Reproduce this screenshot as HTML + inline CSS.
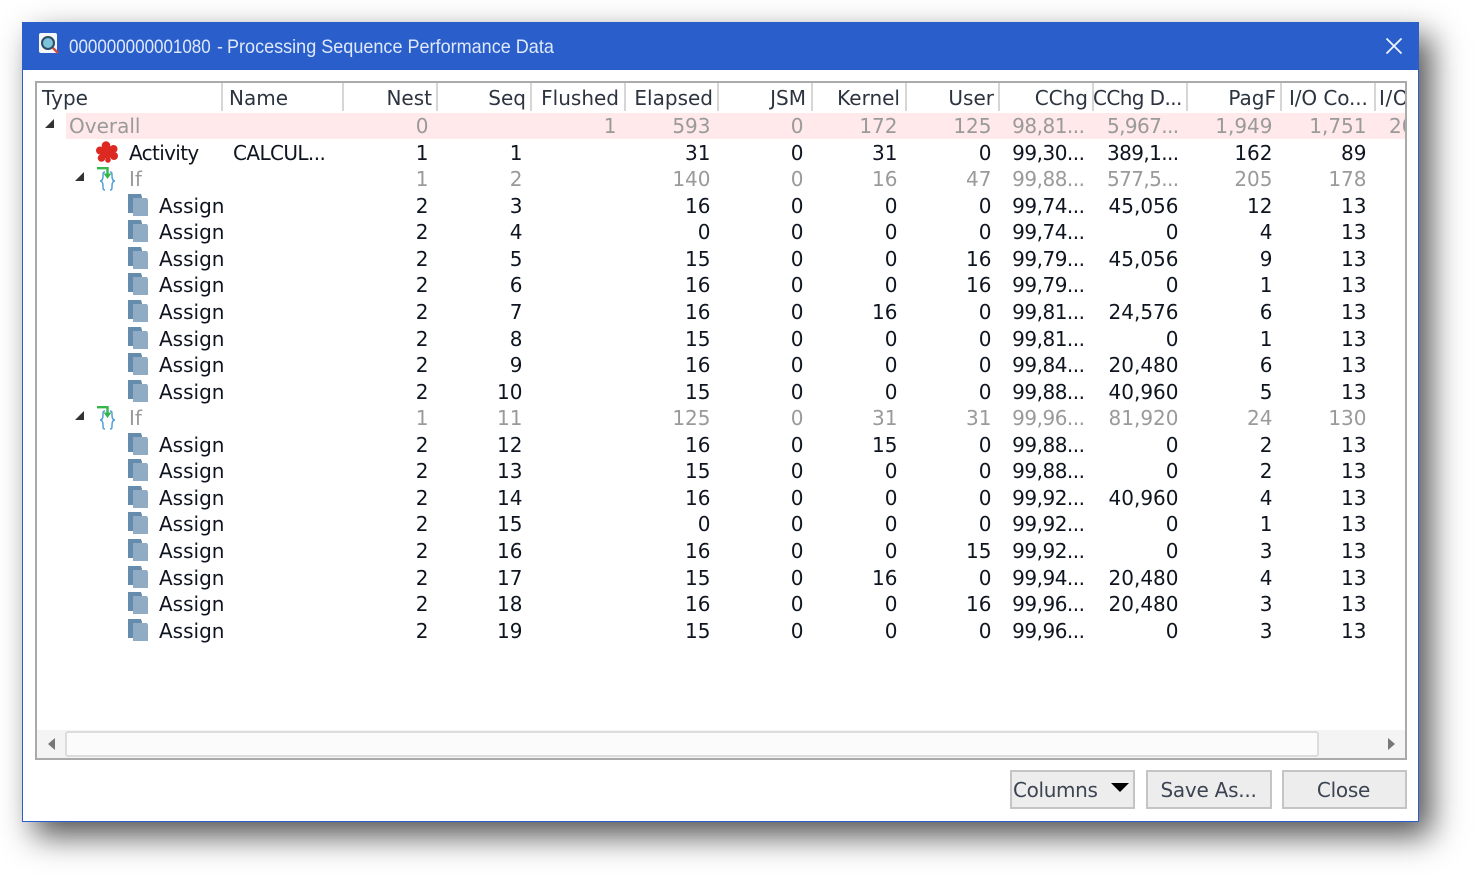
<!DOCTYPE html>
<html><head><meta charset="utf-8"><style>
html,body{margin:0;padding:0;width:1474px;height:877px;overflow:hidden;background:#fff}
body{position:relative;font-family:"DejaVu Sans","Liberation Sans",sans-serif;font-size:20px;color:#0f1520}
#win{position:absolute;left:22px;top:22px;width:1395px;height:798px;background:#fff;border:1px solid #2a5fcb;box-shadow:12px 14px 30px 0 rgba(0,0,0,.68)}
#bar{position:absolute;left:22px;top:22px;width:1397px;height:48px;background:#2a5fcb}
.tt{position:absolute;top:36px;font:19.5px/22px "Liberation Sans",sans-serif;color:#dfe9fb;white-space:nowrap;transform-origin:0 0}
#panel{position:absolute;left:35px;top:81px;width:1368px;height:675px;border:2px solid #aaa;overflow:hidden;background:#fff}
.h{position:absolute;top:2px;height:28px;line-height:26px;white-space:nowrap;color:#2c3440}
.s{position:absolute;top:0;width:2px;height:28px;background:#d6d6d6}
.r{position:absolute;left:0;width:1368px;height:26px;line-height:26px;white-space:nowrap}
.g{color:#9a9a9a}
.r span{position:absolute;top:0}
.a{text-align:right;width:100.5px}
.o{background:#ffe9ea;left:29px!important;width:1339px}
.c1{left:291px}.c2{left:385px}.c3{left:479px}.c4{left:573px}.c5{left:666px}.c6{left:760px}.c7{left:854px}.c8{left:947px;letter-spacing:-.5px}.c9{left:1041px}.c10{left:1135px}.c11{left:1229px}
.e{letter-spacing:-.6px}
.t{left:122px}.t2{left:92px}
.ic{position:absolute;left:91px;top:0}
.tri{position:absolute;width:0;height:0;border-style:solid;border-width:0 0 9px 9px;border-color:transparent transparent #333 transparent}
.b{position:absolute;top:770px;height:35px;width:121px;background:#ededed;border:2px solid #c4c4c4;text-align:center;line-height:37px;color:#3c4452;letter-spacing:-.25px}
svg{display:block}
</style></head><body>
<div id="win"></div>
<div id="bar"></div>
<svg style="position:absolute;left:38px;top:32px" width="24" height="24" viewBox="0 0 24 24"><rect x="1" y="1" width="18" height="20" rx="2" fill="#f4f7fb"/><circle cx="10" cy="11" r="6" fill="#7cc2d8" stroke="#2d4a66" stroke-width="2"/><path d="M15 16l5 5" stroke="#d8493a" stroke-width="2.4"/></svg>
<div class="tt" style="left:69px;transform:scaleX(.871)">000000000001080</div>
<div class="tt" style="left:217px;transform:scaleX(.9)">-</div>
<div class="tt" style="left:227px;transform:scaleX(.925)">Processing Sequence Performance Data</div>
<svg style="position:absolute;left:1385px;top:37px" width="18" height="18" viewBox="0 0 18 18"><path d="M1.500 1.500L16.500 16.500M16.500 1.500L1.500 16.500" stroke="#f0f4fc" stroke-width="1.800"/></svg>

<div id="panel">
<div class="h" style="left:5px">Type</div><div class="s" style="left:184px"></div>
<div class="h" style="left:192px">Name</div><div class="s" style="left:305px"></div>
<div class="h" style="right:973px">Nest</div><div class="s" style="left:399px"></div>
<div class="h" style="right:879px">Seq</div><div class="s" style="left:493px"></div>
<div class="h" style="right:786px">Flushed</div><div class="s" style="left:587px"></div>
<div class="h" style="right:692px">Elapsed</div><div class="s" style="left:680px"></div>
<div class="h" style="right:599px">JSM</div><div class="s" style="left:774px"></div>
<div class="h" style="right:505px">Kernel</div><div class="s" style="left:868px"></div>
<div class="h" style="right:411px">User</div><div class="s" style="left:961px"></div>
<div class="h" style="right:317px">CChg</div><div class="s" style="left:1055px"></div>
<div class="h" style="left:1056px;letter-spacing:-.6px">CChg D...</div><div class="s" style="left:1149px"></div>
<div class="h" style="right:129px">PagF</div><div class="s" style="left:1243px"></div>
<div class="h" style="left:1252px;letter-spacing:-.1px">I/O Co...</div><div class="s" style="left:1337px"></div>
<div class="h" style="left:1342px;letter-spacing:.6px">I/O</div>

<div class="r g" style="top:30px"><span class="o" style="height:26px"></span><span style="left:32px">Overall</span><span class="a c1">0</span><span class="a c3">1</span><span class="a c4">593</span><span class="a c5">0</span><span class="a c6">172</span><span class="a c7">125</span><span class="a c8">98,81...</span><span class="a c9 e">5,967...</span><span class="a c10">1,949</span><span class="a c11">1,751</span><span style="left:1352px">20</span></div>
<div class="tri" style="left:8px;top:36px"></div>

<div class="r" style="top:57px"><svg class="ic" style="left:59px;top:1px" width="23" height="24" viewBox="0 0 23 24"><g fill="#dc2a22"><circle cx="10" cy="4.500" r="4.300"/><circle cx="17.500" cy="8" r="4"/><circle cx="18" cy="15" r="4"/><circle cx="5.500" cy="17" r="3.800"/><circle cx="4" cy="9.500" r="4"/><circle cx="11" cy="11" r="6.500"/><circle cx="12" cy="19" r="2.800"/></g></svg><span style="left:92px;letter-spacing:-.65px">Activity</span><span style="left:196px;letter-spacing:-.6px">CALCUL...</span><span class="a c1">1</span><span class="a c2">1</span><span class="a c4">31</span><span class="a c5">0</span><span class="a c6">31</span><span class="a c7">0</span><span class="a c8">99,30...</span><span class="a c9 e">389,1...</span><span class="a c10">162</span><span class="a c11">89</span></div>

<div class="r g" style="top:83px"><svg class="ic" style="left:60px;top:1px" width="22" height="24" viewBox="0 0 22 24"><path d="M0 1.200h10.500v6" fill="none" stroke="#35b54a" stroke-width="2.400"/><path d="M6.500 6.500h8l-4 5.500z" fill="#35b54a"/><path d="M8 5c-2 0-2 1-2 4s-1 5-3 5c2 0 3 2 3 5s0 4 2 4M13 5c2 0 2 1 2 4s1 5 3 5c-2 0-3 2-3 5s0 4-2 4" fill="none" stroke="#4f9fd8" stroke-width="1.500"/></svg><span class="t2">If</span><span class="a c1">1</span><span class="a c2">2</span><span class="a c4">140</span><span class="a c5">0</span><span class="a c6">16</span><span class="a c7">47</span><span class="a c8">99,88...</span><span class="a c9 e">577,5...</span><span class="a c10">205</span><span class="a c11">178</span></div>
<div class="tri" style="left:38px;top:89px"></div>

<div class="r" style="top:110px"><svg class="ic" width="22" height="24" viewBox="0 0 22 24"><path d="M0 1h13l1 3v16H0z" fill="#668cad"/><path d="M5 5h14l1 2v16H5z" fill="#8facc4"/></svg><span class="t">Assign</span><span class="a c1">2</span><span class="a c2">3</span><span class="a c4">16</span><span class="a c5">0</span><span class="a c6">0</span><span class="a c7">0</span><span class="a c8">99,74...</span><span class="a c9">45,056</span><span class="a c10">12</span><span class="a c11">13</span></div>
<div class="r" style="top:136px"><svg class="ic" width="22" height="24" viewBox="0 0 22 24"><path d="M0 1h13l1 3v16H0z" fill="#668cad"/><path d="M5 5h14l1 2v16H5z" fill="#8facc4"/></svg><span class="t">Assign</span><span class="a c1">2</span><span class="a c2">4</span><span class="a c4">0</span><span class="a c5">0</span><span class="a c6">0</span><span class="a c7">0</span><span class="a c8">99,74...</span><span class="a c9">0</span><span class="a c10">4</span><span class="a c11">13</span></div>
<div class="r" style="top:163px"><svg class="ic" width="22" height="24" viewBox="0 0 22 24"><path d="M0 1h13l1 3v16H0z" fill="#668cad"/><path d="M5 5h14l1 2v16H5z" fill="#8facc4"/></svg><span class="t">Assign</span><span class="a c1">2</span><span class="a c2">5</span><span class="a c4">15</span><span class="a c5">0</span><span class="a c6">0</span><span class="a c7">16</span><span class="a c8">99,79...</span><span class="a c9">45,056</span><span class="a c10">9</span><span class="a c11">13</span></div>
<div class="r" style="top:189px"><svg class="ic" width="22" height="24" viewBox="0 0 22 24"><path d="M0 1h13l1 3v16H0z" fill="#668cad"/><path d="M5 5h14l1 2v16H5z" fill="#8facc4"/></svg><span class="t">Assign</span><span class="a c1">2</span><span class="a c2">6</span><span class="a c4">16</span><span class="a c5">0</span><span class="a c6">0</span><span class="a c7">16</span><span class="a c8">99,79...</span><span class="a c9">0</span><span class="a c10">1</span><span class="a c11">13</span></div>
<div class="r" style="top:216px"><svg class="ic" width="22" height="24" viewBox="0 0 22 24"><path d="M0 1h13l1 3v16H0z" fill="#668cad"/><path d="M5 5h14l1 2v16H5z" fill="#8facc4"/></svg><span class="t">Assign</span><span class="a c1">2</span><span class="a c2">7</span><span class="a c4">16</span><span class="a c5">0</span><span class="a c6">16</span><span class="a c7">0</span><span class="a c8">99,81...</span><span class="a c9">24,576</span><span class="a c10">6</span><span class="a c11">13</span></div>
<div class="r" style="top:243px"><svg class="ic" width="22" height="24" viewBox="0 0 22 24"><path d="M0 1h13l1 3v16H0z" fill="#668cad"/><path d="M5 5h14l1 2v16H5z" fill="#8facc4"/></svg><span class="t">Assign</span><span class="a c1">2</span><span class="a c2">8</span><span class="a c4">15</span><span class="a c5">0</span><span class="a c6">0</span><span class="a c7">0</span><span class="a c8">99,81...</span><span class="a c9">0</span><span class="a c10">1</span><span class="a c11">13</span></div>
<div class="r" style="top:269px"><svg class="ic" width="22" height="24" viewBox="0 0 22 24"><path d="M0 1h13l1 3v16H0z" fill="#668cad"/><path d="M5 5h14l1 2v16H5z" fill="#8facc4"/></svg><span class="t">Assign</span><span class="a c1">2</span><span class="a c2">9</span><span class="a c4">16</span><span class="a c5">0</span><span class="a c6">0</span><span class="a c7">0</span><span class="a c8">99,84...</span><span class="a c9">20,480</span><span class="a c10">6</span><span class="a c11">13</span></div>
<div class="r" style="top:296px"><svg class="ic" width="22" height="24" viewBox="0 0 22 24"><path d="M0 1h13l1 3v16H0z" fill="#668cad"/><path d="M5 5h14l1 2v16H5z" fill="#8facc4"/></svg><span class="t">Assign</span><span class="a c1">2</span><span class="a c2">10</span><span class="a c4">15</span><span class="a c5">0</span><span class="a c6">0</span><span class="a c7">0</span><span class="a c8">99,88...</span><span class="a c9">40,960</span><span class="a c10">5</span><span class="a c11">13</span></div>

<div class="r g" style="top:322px"><svg class="ic" style="left:60px;top:1px" width="22" height="24" viewBox="0 0 22 24"><path d="M0 1.200h10.500v6" fill="none" stroke="#35b54a" stroke-width="2.400"/><path d="M6.500 6.500h8l-4 5.500z" fill="#35b54a"/><path d="M8 5c-2 0-2 1-2 4s-1 5-3 5c2 0 3 2 3 5s0 4 2 4M13 5c2 0 2 1 2 4s1 5 3 5c-2 0-3 2-3 5s0 4-2 4" fill="none" stroke="#4f9fd8" stroke-width="1.500"/></svg><span class="t2">If</span><span class="a c1">1</span><span class="a c2">11</span><span class="a c4">125</span><span class="a c5">0</span><span class="a c6">31</span><span class="a c7">31</span><span class="a c8">99,96...</span><span class="a c9">81,920</span><span class="a c10">24</span><span class="a c11">130</span></div>
<div class="tri" style="left:38px;top:328px"></div>

<div class="r" style="top:349px"><svg class="ic" width="22" height="24" viewBox="0 0 22 24"><path d="M0 1h13l1 3v16H0z" fill="#668cad"/><path d="M5 5h14l1 2v16H5z" fill="#8facc4"/></svg><span class="t">Assign</span><span class="a c1">2</span><span class="a c2">12</span><span class="a c4">16</span><span class="a c5">0</span><span class="a c6">15</span><span class="a c7">0</span><span class="a c8">99,88...</span><span class="a c9">0</span><span class="a c10">2</span><span class="a c11">13</span></div>
<div class="r" style="top:375px"><svg class="ic" width="22" height="24" viewBox="0 0 22 24"><path d="M0 1h13l1 3v16H0z" fill="#668cad"/><path d="M5 5h14l1 2v16H5z" fill="#8facc4"/></svg><span class="t">Assign</span><span class="a c1">2</span><span class="a c2">13</span><span class="a c4">15</span><span class="a c5">0</span><span class="a c6">0</span><span class="a c7">0</span><span class="a c8">99,88...</span><span class="a c9">0</span><span class="a c10">2</span><span class="a c11">13</span></div>
<div class="r" style="top:402px"><svg class="ic" width="22" height="24" viewBox="0 0 22 24"><path d="M0 1h13l1 3v16H0z" fill="#668cad"/><path d="M5 5h14l1 2v16H5z" fill="#8facc4"/></svg><span class="t">Assign</span><span class="a c1">2</span><span class="a c2">14</span><span class="a c4">16</span><span class="a c5">0</span><span class="a c6">0</span><span class="a c7">0</span><span class="a c8">99,92...</span><span class="a c9">40,960</span><span class="a c10">4</span><span class="a c11">13</span></div>
<div class="r" style="top:428px"><svg class="ic" width="22" height="24" viewBox="0 0 22 24"><path d="M0 1h13l1 3v16H0z" fill="#668cad"/><path d="M5 5h14l1 2v16H5z" fill="#8facc4"/></svg><span class="t">Assign</span><span class="a c1">2</span><span class="a c2">15</span><span class="a c4">0</span><span class="a c5">0</span><span class="a c6">0</span><span class="a c7">0</span><span class="a c8">99,92...</span><span class="a c9">0</span><span class="a c10">1</span><span class="a c11">13</span></div>
<div class="r" style="top:455px"><svg class="ic" width="22" height="24" viewBox="0 0 22 24"><path d="M0 1h13l1 3v16H0z" fill="#668cad"/><path d="M5 5h14l1 2v16H5z" fill="#8facc4"/></svg><span class="t">Assign</span><span class="a c1">2</span><span class="a c2">16</span><span class="a c4">16</span><span class="a c5">0</span><span class="a c6">0</span><span class="a c7">15</span><span class="a c8">99,92...</span><span class="a c9">0</span><span class="a c10">3</span><span class="a c11">13</span></div>
<div class="r" style="top:482px"><svg class="ic" width="22" height="24" viewBox="0 0 22 24"><path d="M0 1h13l1 3v16H0z" fill="#668cad"/><path d="M5 5h14l1 2v16H5z" fill="#8facc4"/></svg><span class="t">Assign</span><span class="a c1">2</span><span class="a c2">17</span><span class="a c4">15</span><span class="a c5">0</span><span class="a c6">16</span><span class="a c7">0</span><span class="a c8">99,94...</span><span class="a c9">20,480</span><span class="a c10">4</span><span class="a c11">13</span></div>
<div class="r" style="top:508px"><svg class="ic" width="22" height="24" viewBox="0 0 22 24"><path d="M0 1h13l1 3v16H0z" fill="#668cad"/><path d="M5 5h14l1 2v16H5z" fill="#8facc4"/></svg><span class="t">Assign</span><span class="a c1">2</span><span class="a c2">18</span><span class="a c4">16</span><span class="a c5">0</span><span class="a c6">0</span><span class="a c7">16</span><span class="a c8">99,96...</span><span class="a c9">20,480</span><span class="a c10">3</span><span class="a c11">13</span></div>
<div class="r" style="top:535px"><svg class="ic" width="22" height="24" viewBox="0 0 22 24"><path d="M0 1h13l1 3v16H0z" fill="#668cad"/><path d="M5 5h14l1 2v16H5z" fill="#8facc4"/></svg><span class="t">Assign</span><span class="a c1">2</span><span class="a c2">19</span><span class="a c4">15</span><span class="a c5">0</span><span class="a c6">0</span><span class="a c7">0</span><span class="a c8">99,96...</span><span class="a c9">0</span><span class="a c10">3</span><span class="a c11">13</span></div>

<div style="position:absolute;left:0;top:647px;width:1368px;height:28px;background:#f4f4f4"></div>
<div style="position:absolute;left:28px;top:648px;width:1250px;height:22px;background:#fbfbfb;border:2px solid #dcdcdc;border-radius:3px"></div>
<div style="position:absolute;left:11px;top:655px;width:0;height:0;border-style:solid;border-width:6px 7px 6px 0;border-color:transparent #777 transparent transparent"></div>
<div style="position:absolute;left:1351px;top:655px;width:0;height:0;border-style:solid;border-width:6px 0 6px 7px;border-color:transparent transparent transparent #777"></div>
</div>

<div class="b" style="left:1010px;text-align:left;letter-spacing:-.35px"><span style="margin-left:1px">Columns</span></div>
<div style="position:absolute;left:1111px;top:783px;width:0;height:0;border-style:solid;border-width:9px 9px 0 9px;border-color:#000 transparent transparent transparent"></div>
<div class="b" style="left:1145px;width:122px;margin-left:1px;text-indent:-1px">Save As...</div>
<div class="b" style="left:1282px;text-indent:-2px">Close</div>
</body></html>
